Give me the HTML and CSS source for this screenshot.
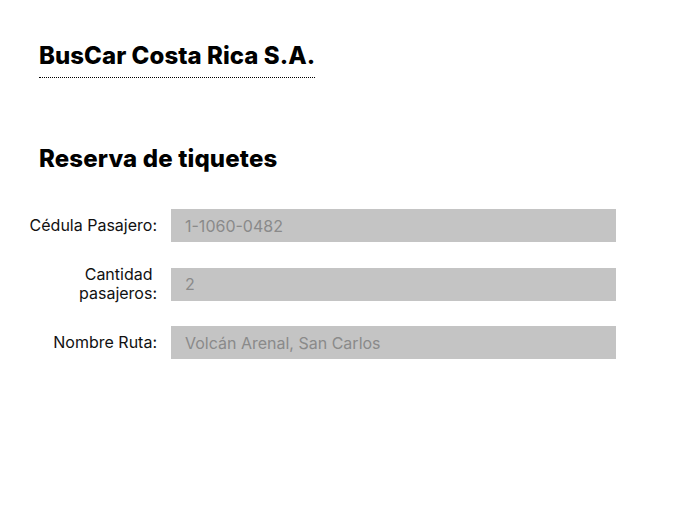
FILE: index.html
```html
<!DOCTYPE html>
<html lang="es">
<head>
<meta charset="utf-8">
<title>BusCar Costa Rica S.A.</title>
<link rel="stylesheet" href="styles.css">
</head>
<body>
<div class="page">
  <header class="brand">
    <h1 class="brand-title">BusCar Costa Rica S.A.</h1>
  </header>
  <h2 class="section-title">Reserva de tiquetes</h2>
  <form class="form">
    <div class="row">
      <label class="label" for="cedula">Cédula Pasajero:</label>
      <input class="field" id="cedula" type="text" placeholder="1-1060-0482">
    </div>
    <div class="row">
      <label class="label" for="cantidad">Cantidad&nbsp; pasajeros:</label>
      <input class="field" id="cantidad" type="text" placeholder="2">
    </div>
    <div class="row">
      <label class="label" for="ruta">Nombre Ruta:</label>
      <input class="field" id="ruta" type="text" placeholder="Volcán Arenal, San Carlos">
    </div>
  </form>
</div>
</body>
</html>
```
FILE: styles.css
```css
* { box-sizing: border-box; }
html, body { margin: 0; padding: 0; background: #fff; }
body { font-family: Inter, "Noto Sans", sans-serif; color: #000; }
.page { padding: 41px 0 0 39px; }
.brand { display: inline-block; border-bottom: 1px dotted #000; padding-bottom: 6px; }
.brand-title { margin: 0; font-size: 24px; font-weight: 800; line-height: 30px; letter-spacing: 0.05px; }
.section-title { margin: 66px 0 0; font-size: 24px; font-weight: 800; line-height: 30px; letter-spacing: 0.15px; }
.form { margin: 35px 0 0 -12px; display: flex; flex-direction: column; gap: 23px; }
.row { display: flex; align-items: center; gap: 14px; }
.label { width: 130px; text-align: right; font-size: 16px; line-height: 19px; color: #111; }
.field { width: 445px; height: 33px; border: 0; background: #c4c4c4; padding: 0 14px; font-family: Inter, sans-serif; font-size: 16px; color: #333; outline: none; }
.field::placeholder { color: #8a8a8a; }
```
